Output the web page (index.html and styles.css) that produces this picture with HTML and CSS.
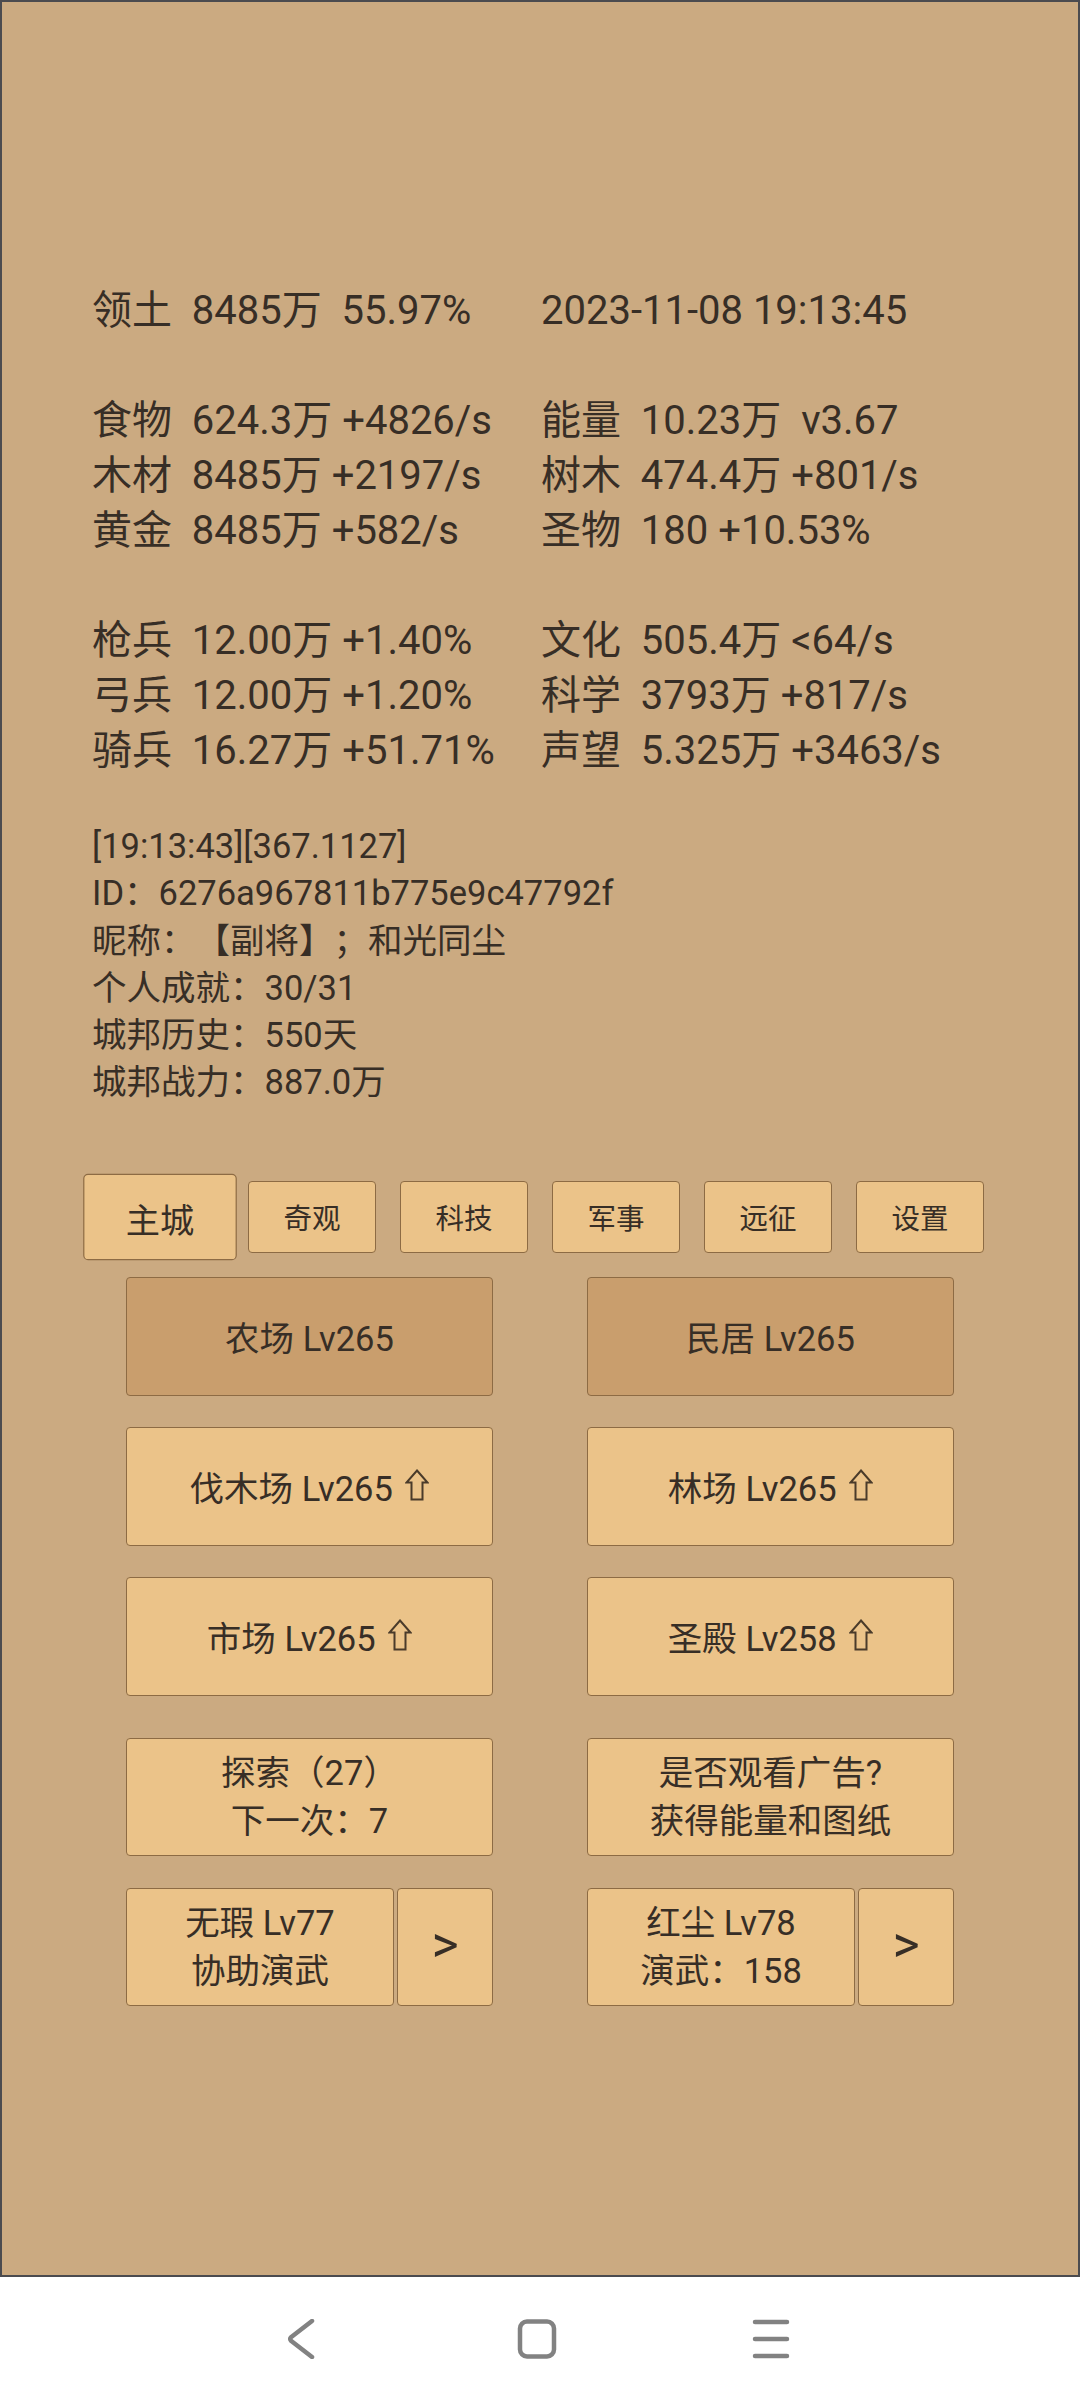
FILE: index.html
```html
<!DOCTYPE html>
<html lang="zh">
<head>
<meta charset="utf-8">
<title>城邦</title>
<link rel="stylesheet" href="styles.css">
</head>
<body>
<div class="screen">
  <div class="stats">
    <div class="cell">领土  8485万  55.97%</div><div class="cell">2023-11-08 19:13:45</div>
    <div class="blank"></div>
    <div class="cell">食物  624.3万 +4826/s</div><div class="cell">能量  10.23万  v3.67</div>
    <div class="cell">木材  8485万 +2197/s</div><div class="cell">树木  474.4万 +801/s</div>
    <div class="cell">黄金  8485万 +582/s</div><div class="cell">圣物  180 +10.53%</div>
    <div class="blank"></div>
    <div class="cell">枪兵  12.00万 +1.40%</div><div class="cell">文化  505.4万 &lt;64/s</div>
    <div class="cell">弓兵  12.00万 +1.20%</div><div class="cell">科学  3793万 +817/s</div>
    <div class="cell">骑兵  16.27万 +51.71%</div><div class="cell">声望  5.325万 +3463/s</div>
  </div>

  <div class="info">
    <div>[19:13:43][367.1127]</div>
    <div>ID：6276a967811b775e9c47792f</div>
    <div>昵称：【副将】；和光同尘</div>
    <div>个人成就：30/31</div>
    <div>城邦历史：550天</div>
    <div>城邦战力：887.0万</div>
  </div>

  <div class="tabs">
    <div class="tab active">主城</div>
    <div class="tab">奇观</div>
    <div class="tab">科技</div>
    <div class="tab">军事</div>
    <div class="tab">远征</div>
    <div class="tab">设置</div>
  </div>

  <div class="grid">
    <div class="btn dark">农场 Lv265</div>
    <div class="btn dark">民居 Lv265</div>
    <div class="btn">伐木场 Lv265 <svg class="up" viewBox="0 0 24 32"><path d="M12 1.5 L22.5 13.5 H17.5 V30.5 H6.5 V13.5 H1.5 Z"/></svg></div>
    <div class="btn">林场 Lv265 <svg class="up" viewBox="0 0 24 32"><path d="M12 1.5 L22.5 13.5 H17.5 V30.5 H6.5 V13.5 H1.5 Z"/></svg></div>
    <div class="btn">市场 Lv265 <svg class="up" viewBox="0 0 24 32"><path d="M12 1.5 L22.5 13.5 H17.5 V30.5 H6.5 V13.5 H1.5 Z"/></svg></div>
    <div class="btn">圣殿 Lv258 <svg class="up" viewBox="0 0 24 32"><path d="M12 1.5 L22.5 13.5 H17.5 V30.5 H6.5 V13.5 H1.5 Z"/></svg></div>
  </div>

  <div class="grid grid2">
    <div class="btn two">探索（27）<br>下一次：7</div>
    <div class="btn two">是否观看广告?<br>获得能量和图纸</div>
    <div class="pair">
      <div class="btn two main">无瑕 Lv77<br>协助演武</div>
      <div class="btn arrow">&gt;</div>
    </div>
    <div class="pair">
      <div class="btn two main">红尘 Lv78<br>演武：158</div>
      <div class="btn arrow">&gt;</div>
    </div>
  </div>
</div>

<div class="nav">
  <svg class="navicon" viewBox="0 0 40 40"><path d="M30 2 L9 18.3 Q7.5 20 9 21.7 L30 38"/></svg>
  <svg class="navicon" viewBox="0 0 40 40"><rect x="3" y="2.5" width="34" height="35" rx="7"/></svg>
  <svg class="navicon" viewBox="0 0 40 40"><path d="M3 3 H35 M3 20 H35 M3 37 H35"/></svg>
</div>
</body>
</html>
```

FILE: styles.css
```css
html, body {
  margin: 0;
  padding: 0;
  background: #ffffff;
}

body {
  width: 1080px;
  height: 2401px;
  overflow: hidden;
  font-family: Roboto, "Noto Sans CJK SC", sans-serif;
  color: #372e26;
  text-spacing-trim: space-all;
}

.screen {
  box-sizing: border-box;
  height: 2277px;
  border: 2px solid #4b4b4f;
  background: #cbaa81;
  padding-top: 281px;
}

.stats {
  margin-left: 90px;
  display: grid;
  grid-template-columns: 449px 1fr;
  grid-auto-rows: 55px;
  font-size: 40px;
  line-height: 55px;
  white-space: pre;
}

.blank {
  grid-column: 1 / 3;
}

.info {
  margin-left: 90px;
  margin-top: 45px;
  font-size: 34.5px;
  line-height: 47.3px;
}

.tabs {
  display: flex;
  gap: 24px;
  margin-left: 94px;
  margin-top: 74px;
}

.tab {
  box-sizing: border-box;
  width: 128px;
  height: 72px;
  background: #ebc389;
  border: 1.5px solid #8d6b44;
  border-radius: 4px;
  font-size: 28.5px;
  display: flex;
  align-items: center;
  justify-content: center;
}

.tab.active {
  transform: scale(1.2);
}

.grid {
  display: grid;
  grid-template-columns: 367px 367px;
  grid-auto-rows: 119px;
  column-gap: 94px;
  row-gap: 31px;
  margin-left: 124px;
  margin-top: 24px;
}

.grid2 {
  margin-top: 42px;
  row-gap: 32px;
  grid-auto-rows: 118px;
}

.btn {
  box-sizing: border-box;
  background: #ebc389;
  border: 1.5px solid #8d6b44;
  border-radius: 4px;
  font-size: 34.5px;
  display: flex;
  align-items: center;
  justify-content: center;
  text-align: center;
  white-space: pre;
}

.btn.dark {
  background: #c99e6d;
}

.btn.two {
  line-height: 48px;
}

.up {
  width: 24px;
  height: 32px;
  margin-left: 4px;
  vertical-align: -4px;
  position: relative;
  top: -1px;
}

.up path {
  fill: none;
  stroke: #4a3b2a;
  stroke-width: 2;
  stroke-linejoin: miter;
}

.pair {
  display: flex;
  gap: 3px;
}

.pair .main {
  width: 268px;
  flex: none;
}

.pair .arrow {
  flex: 1;
  font-size: 52px;
  padding-bottom: 4px;
}

.nav {
  height: 124px;
  display: flex;
  align-items: center;
  justify-content: center;
  gap: 195px;
  padding-right: 6px;
}

.navicon {
  width: 40px;
  height: 40px;
}

.navicon path,
.navicon rect {
  fill: none;
  stroke: #828282;
  stroke-width: 4.5;
  stroke-linecap: round;
  stroke-linejoin: round;
}
```
